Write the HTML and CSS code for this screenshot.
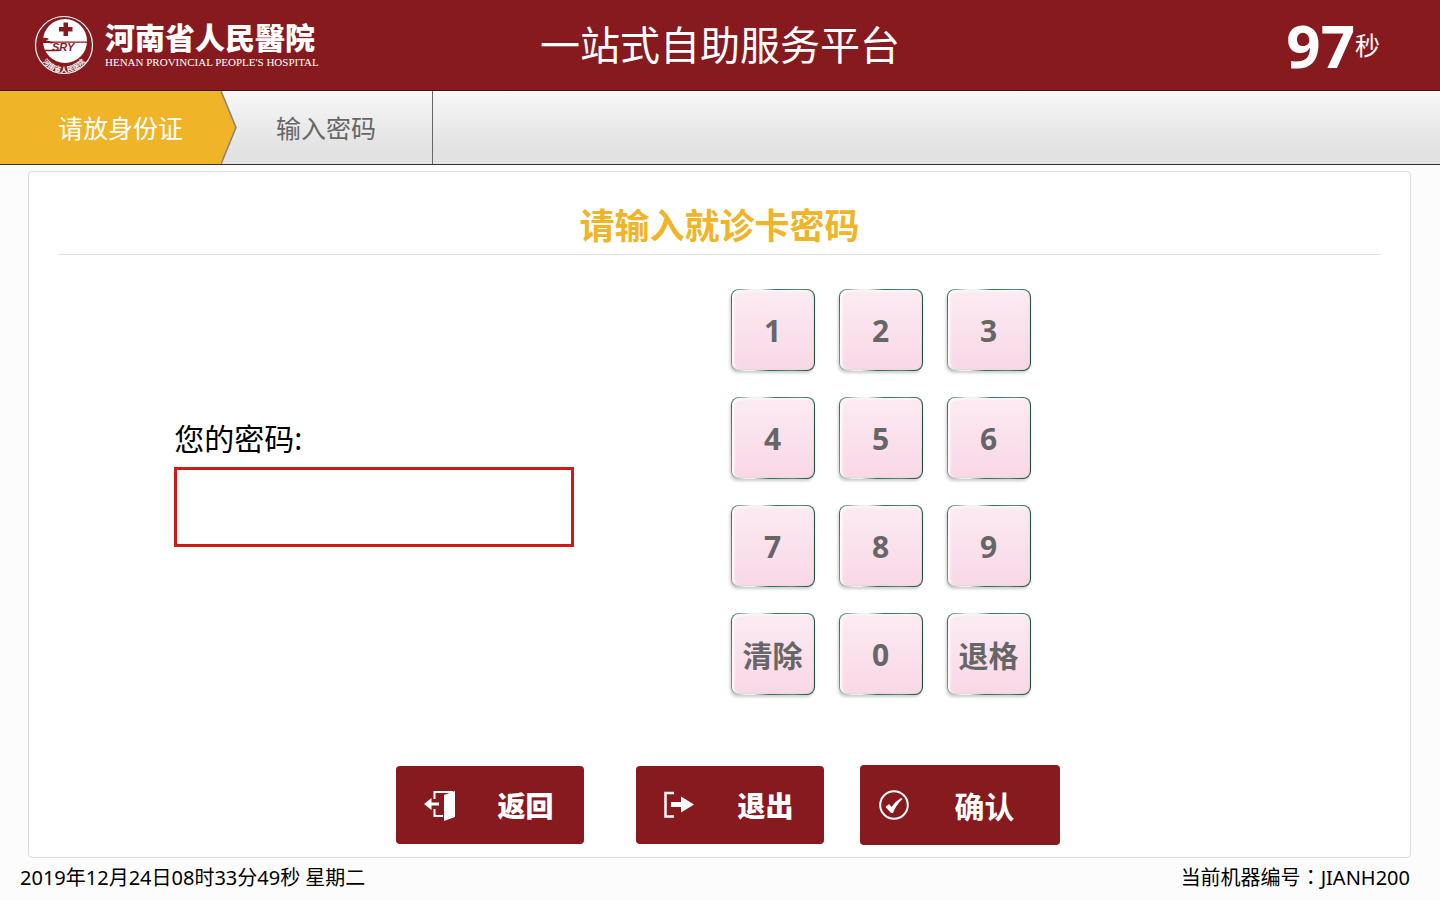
FILE: index.html
```html
<!DOCTYPE html>
<html lang="zh-CN">
<head>
	<meta charset="UTF-8">
	<title>一站式自助服务平台</title>
	<link rel="stylesheet" href="styles.css">
</head>
<body>
	<header class="header">
		<div class="logo">
			<svg class="logo-mark" viewBox="0 0 60 60" aria-hidden="true">
				<defs><path id="arc" d="M4 36 A26.500 26.500 0 0 0 56 36"/></defs>
				<circle cx="30" cy="30" r="28.500" fill="none" stroke="#fff" stroke-width="1.200"/>
				<circle cx="31" cy="26" r="22" fill="#fff"/>
				<path fill="#871a1f" d="M29.500 7.500 h4.500 v4.500 h4.500 v4.500 H34 V21 h-4.500 v-4.500 H25 v-4.500 h4.500 Z"/>
				<path fill="#871a1f" d="M7 22.500 L13 23 L15 24 L12 25.500 L18 26.500 H54 V27.800 H20 L18 28.500 L14 28 L8 28 Z"/>
				<path fill="#871a1f" d="M9 34.800 H27 L25 36.200 H11 Z"/>
				<text x="18" y="36" class="mark-sry">SRY</text>
				<text class="mark-name"><textPath href="#arc" startOffset="50%" text-anchor="middle">河南省人民医院</textPath></text>
			</svg>
			<div class="logo-text">
				<p class="logo-cn">河南省人民醫院</p>
				<p class="logo-en">HENAN PROVINCIAL PEOPLE'S HOSPITAL</p>
			</div>
		</div>
		<h1 class="title">一站式自助服务平台</h1>
		<div class="timer"><b>97</b><span>秒</span></div>
	</header>

	<ol class="steps">
		<li class="step step-on">
			<span>请放身份证</span>
			<svg class="arrow" viewBox="0 0 16 72" preserveAspectRatio="none" aria-hidden="true">
				<path d="M0 0 L15 36 L0 72 Z" fill="#efb428"/>
				<path d="M0 0 L15 36 L0 72" fill="none" stroke="#8d8272" stroke-width="1.500"/>
			</svg>
		</li>
		<li class="step"><span>输入密码</span></li>
	</ol>

	<main class="card">
		<h2 class="card-title">请输入就诊卡密码</h2>
		<div class="content">
			<div class="form">
				<label for="password">您的密码:</label>
				<input type="password" id="password">
			</div>
			<div class="keypad" id="keypad">
				<button type="button">1</button>
				<button type="button">2</button>
				<button type="button">3</button>
				<button type="button">4</button>
				<button type="button">5</button>
				<button type="button">6</button>
				<button type="button">7</button>
				<button type="button">8</button>
				<button type="button">9</button>
				<button type="button">清除</button>
				<button type="button">0</button>
				<button type="button">退格</button>
			</div>
		</div>
		<div class="actions">
			<button type="button" class="btn btn-back">
				<svg viewBox="0 0 32 32" aria-hidden="true">
					<path d="M10.500 10 V3 H29 M10.500 20 V27 H19" fill="none" stroke="#fff" stroke-width="2"/>
					<path d="M20 6 L31 2 V28 L20 32 Z" fill="#fff"/>
					<path d="M0 15 L7.500 9 V13.500 H15 V16.500 H7.500 V21 Z" fill="#fff"/>
				</svg>
				<span>返回</span>
			</button>
			<button type="button" class="btn btn-exit">
				<svg viewBox="0 0 32 32" aria-hidden="true">
					<path d="M10 4 H1.500 V27.500 H10" fill="none" stroke="#fff" stroke-width="2.500"/>
					<path d="M7 13 H17 V7.500 L30 15.500 L17 23.500 V18 H7 Z" fill="#fff"/>
				</svg>
				<span>退出</span>
			</button>
			<button type="button" class="btn btn-ok">
				<svg viewBox="0 0 32 32" aria-hidden="true">
					<circle cx="16" cy="16" r="13.800" fill="none" stroke="#fff" stroke-width="2"/>
					<path d="M7.500 18 L11 15 L13.500 18 Q17 12.500 23 9 L24.500 10 Q18 16 15 24 L13 24 Z" fill="#fff"/>
				</svg>
				<span>确认</span>
			</button>
		</div>
	</main>

	<footer class="footer">
		<span>2019年12月24日08时33分49秒 星期二</span>
		<span>当前机器编号<span class="colon" lang="zh-TW">：</span>JIANH200</span>
	</footer>

<script>
	var pwd=document.getElementById("password");
	var keys=document.getElementById("keypad").getElementsByTagName("button");

	for(var i = 0;i < keys.length;i++){

		keys[i].onclick=function(){
			var key=this.innerHTML;
			if(key === "清除"){
				pwd.value="";
			}
			else if(key === "退格"){
				pwd.value=pwd.value.slice(0,-1);
			}
			else{
				pwd.value += key;
			}
		}
	}
</script>
</body>
</html>
```
FILE: styles.css
```css
*{
	margin:0;
	padding:0;
	box-sizing:border-box;
}
body{
	display:flex;
	flex-direction:column;
	min-height:100vh;
	background:#fcfcfc;
	font-family:"Noto Sans","Noto Sans CJK SC",sans-serif;
	color:#000;
}
button,input{
	font-family:inherit;
}

/* 顶部 */
.header{
	display:grid;
	grid-template-columns:1fr auto 1fr;
	align-items:center;
	height:91px;
	border-bottom:1px solid #3a1518;
	background:#871a1f;
	color:#fff;
}
.logo{
	display:flex;
	align-items:center;
	gap:11px;
	padding-left:34px;
}
.logo-mark{
	width:60px;
	height:60px;
}
.mark-sry{
	font:italic bold 11px "Liberation Sans",sans-serif;
	fill:#871a1f;
}
.mark-name{
	font-size:7px;
	font-weight:bold;
	fill:#fff;
}
.logo-cn{
	font-size:30px;
	font-weight:900;
	line-height:34px;
}
.logo-en{
	font-family:"Liberation Serif",serif;
	font-size:11px;
	line-height:14px;
	white-space:nowrap;
}
.title{
	font-size:40px;
	font-weight:normal;
	line-height:60px;
}
.timer{
	display:flex;
	align-items:center;
	justify-content:flex-end;
	padding-right:60px;
	font-size:25px;
	line-height:88px;
}
.timer b{
	font-size:60px;
}

/* 步骤条 */
.steps{
	display:flex;
	height:74px;
	border-bottom:1px solid #333;
	background:linear-gradient(#f7f7f7,#e2e2e2 80%);
	list-style:none;
}
.step{
	position:relative;
	padding:0 56px 0 55px;
	border-right:1px solid #666;
	color:#666;
	font-size:25px;
	line-height:74px;
}
.step-on{
	padding:0 38px 0 58px;
	border-right:0;
	background:#efb428;
	color:#fff;
}
.arrow{
	position:absolute;
	top:0;
	left:100%;
	width:16px;
	height:100%;
}

/* 内容 */
.card{
	display:flex;
	flex:1;
	flex-direction:column;
	margin:6px 29px 0 28px;
	border:1px solid #ddd;
	border-radius:4px;
	background:#fff;
}
.card-title{
	margin:0 29px;
	padding-top:26px;
	border-bottom:1px solid #e2e2e2;
	color:#efb428;
	font-size:35px;
	line-height:56px;
	text-align:center;
}
.content{
	display:grid;
	grid-template-columns:1fr 1fr;
	align-items:center;
	padding-top:34px;
}
.form{
	justify-self:center;
	width:400px;
	padding-bottom:26px;
}
.form label{
	display:block;
	font-size:30px;
	line-height:56px;
}
.form input{
	display:block;
	width:100%;
	height:80px;
	padding:0 20px;
	border:3px solid #d01a1a;
	background:#fff;
	font-size:40px;
}
.keypad{
	display:grid;
	grid-template-columns:repeat(3,84px);
	gap:26px 24px;
	padding-left:11px;
}
.keypad button{
	height:82px;
	border:1px solid transparent;
	border-radius:8px;
	background:
		linear-gradient(#fcebf3,#f9d7e6) padding-box,
		linear-gradient(95deg,#2f6a52,#e8eeeb 22%,#f4f4f4 32%,#2a7854 50%,#5a9278 75%,#1d4f3a 95%) border-box;
	box-shadow:-1px 2px 3px #ccc,inset 2px 1px 3px #fff,inset 0 0 1px #3a8060;
	color:#666;
	font-size:30px;
	font-weight:bold;
}
.actions{
	display:flex;
	align-items:center;
	justify-content:center;
	gap:36px;
	margin-top:auto;
	padding:0 0 12px 16px;
}
.btn{
	display:flex;
	align-items:center;
	width:188px;
	height:78px;
	border:0;
	border-radius:4px;
	background:#871a1f;
	color:#fff;
	font-size:28px;
	font-weight:900;
}
.btn svg{
	width:32px;
	height:32px;
}
.btn-back,.btn-exit{
	gap:42px;
	padding-left:28px;
}
.btn-back{
	margin-right:16px;
}
.btn-ok{
	gap:45px;
	width:200px;
	height:80px;
	padding-left:18px;
	font-size:30px;
	font-weight:bold;
}

/* 底部 */
.footer{
	display:flex;
	justify-content:space-between;
	padding:0 30px 2px 20px;
	font-size:20px;
	line-height:40px;
}
.colon{
	font-family:"Noto Sans CJK TC",sans-serif;
	line-height:20px;
}
```
